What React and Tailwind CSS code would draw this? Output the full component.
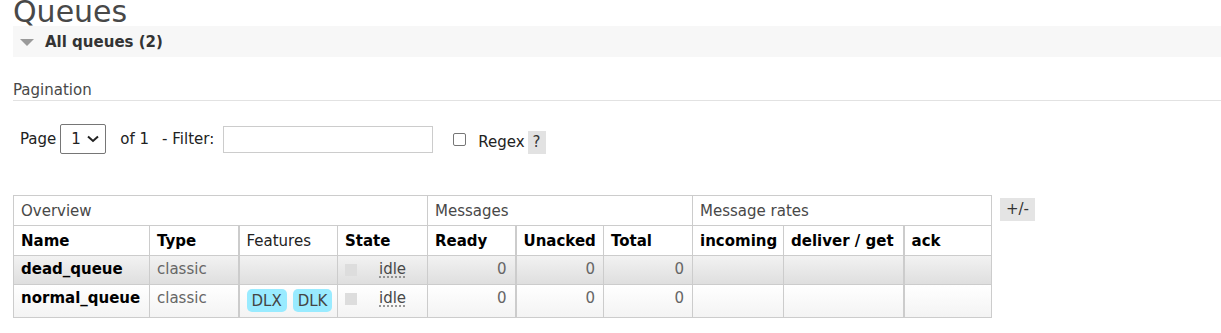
export default function App() {
  const queues = [
    { name: "dead_queue", type: "classic", features: [], state: "idle", ready: 0, unacked: 0, total: 0 },
    { name: "normal_queue", type: "classic", features: ["DLX", "DLK"], state: "idle", ready: 0, unacked: 0, total: 0 },
  ];

  const th = "border border-[#cccccc] px-[7px] pt-[6px] pb-[4px] text-left align-top leading-[19px]";
  const td = "border border-[#cccccc] px-[7px] pt-[4px] pb-[5px] align-top leading-[19px]";

  return (
    <div className="w-[1221px] h-[333px] overflow-hidden bg-white font-['DejaVu_Sans',sans-serif] text-[15px] text-[#484848]">
      <h1 className="pl-[13px] text-[30px] leading-[24px] font-normal text-[#484848]">Queues</h1>

      {/* Section header */}
      <div className="ml-[13px] mt-[2px] h-[31px] flex items-center gap-[11px] pl-[7px] pt-[2px] bg-[#f7f7f7]">
        <svg width="14" height="7" viewBox="0 0 14 7">
          <polygon points="0,0 14,0 7,7" fill="#9a9a9a" />
        </svg>
        <span className="font-bold text-[#333]">All queues (2)</span>
      </div>

      {/* Pagination */}
      <div className="ml-[13px] mt-[22px] pt-[1px] leading-[20px] border-b border-[#e2e2e2]">Pagination</div>

      <div className="ml-[20px] mt-[23px] h-[30px] flex items-center text-[#222]">
        <span>Page</span>
        <div className="ml-[4px] w-[46px] h-[30px] flex items-center justify-between pl-[10px] pr-[6px] border border-[#767676] rounded-[2px] bg-white">
          <span>1</span>
          <svg width="12" height="8" viewBox="0 0 12 8">
            <polyline points="1,1.5 6,6 11,1.5" fill="none" stroke="#222" strokeWidth="2" />
          </svg>
        </div>
        <span className="ml-[14px]">of 1</span>
        <span className="ml-[13px]">- Filter:</span>
        <input type="text" className="ml-[9px] w-[210px] h-[27px] border border-[#cccccc] bg-white outline-none" />
        <div className="ml-[20px] w-[13px] h-[13px] border border-[#767676] rounded-[2px] bg-white" />
        <div className="ml-[12px] mt-[6px] flex items-center gap-[3px]">
          <span>Regex</span>
          <span className="w-[18px] h-[23px] flex items-center justify-center bg-[#e2e2e2] text-[#333]">?</span>
        </div>
      </div>

      {/* Table */}
      <div className="ml-[13px] mt-[41px] flex items-start gap-[8px]">
        <table className="border-collapse table-fixed w-[978px]">
          <colgroup>
            <col className="w-[136px]" />
            <col className="w-[89px]" />
            <col className="w-[99px]" />
            <col className="w-[90px]" />
            <col className="w-[88px]" />
            <col className="w-[88px]" />
            <col className="w-[89px]" />
            <col className="w-[91px]" />
            <col className="w-[120px]" />
            <col className="w-[88px]" />
          </colgroup>
          <thead>
            <tr>
              <th colSpan={4} className={`${th} font-normal text-[#484848]`}>Overview</th>
              <th colSpan={3} className={`${th} font-normal text-[#484848]`}>Messages</th>
              <th colSpan={3} className={`${th} font-normal text-[#484848]`}>Message rates</th>
            </tr>
            <tr className="text-black">
              <th className={`${th} font-bold`}>Name</th>
              <th className={`${th} font-bold`}>Type</th>
              <th className={`${th} font-normal border-l-2 text-[#222]`}>Features</th>
              <th className={`${th} font-bold`}>State</th>
              <th className={`${th} font-bold`}>Ready</th>
              <th className={`${th} font-bold border-l-2`}>Unacked</th>
              <th className={`${th} font-bold`}>Total</th>
              <th className={`${th} font-bold`}>incoming</th>
              <th className={`${th} font-bold`}>deliver / get</th>
              <th className={`${th} font-bold border-l-2`}>ack</th>
            </tr>
          </thead>
          <tbody>
            {queues.map((q, i) => (
              <tr
                key={q.name}
                className={i === 0 ? "bg-gradient-to-b from-[#f2f2f2] to-[#dedede]" : "bg-gradient-to-b from-white to-[#f3f3f3]"}
              >
                <td className={`${td} font-bold text-black`}>{q.name}</td>
                <td className={`${td} text-[#666]`}>{q.type}</td>
                <td className={`${td} border-l-2 px-[6px]`}>
                  <div className="flex gap-[6px]">
                    {q.features.map((f) => (
                      <span key={f} className="px-[5px] pt-[3px] pb-[1px] rounded-[5px] bg-[#99ebff] text-[#444]">{f}</span>
                    ))}
                  </div>
                </td>
                <td className={`${td} px-[6px]`}>
                  <div className="flex items-center">
                    <span className="w-[12px] h-[12px] bg-[#dddddd]" />
                    <span className="ml-[22px] underline decoration-dotted decoration-[#777] underline-offset-[3px]">{q.state}</span>
                  </div>
                </td>
                <td className={`${td} text-right pr-[8px] text-[#666]`}>{q.ready}</td>
                <td className={`${td} text-right pr-[8px] text-[#666] border-l-2`}>{q.unacked}</td>
                <td className={`${td} text-right pr-[8px] text-[#666]`}>{q.total}</td>
                <td className={td}></td>
                <td className={td}></td>
                <td className={`${td} border-l-2`}></td>
              </tr>
            ))}
          </tbody>
        </table>
        <span className="mt-[3px] w-[35px] h-[23px] flex items-center justify-center bg-[#e4e4e4] text-[#333]">+/-</span>
      </div>
    </div>
  );
}
